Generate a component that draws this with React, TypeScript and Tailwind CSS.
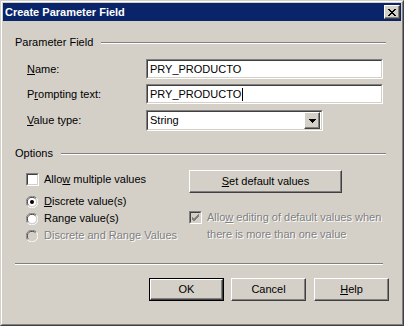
const raised =
  "border border-t-white border-l-white border-r-[#404040] border-b-[#404040] shadow-[inset_-1px_-1px_#808080] bg-[#d4d0c8]";
const sunken =
  "border border-t-[#808080] border-l-[#808080] border-r-white border-b-white";
const sunkenInner =
  "border border-t-[#404040] border-l-[#404040] border-r-[#d4d0c8] border-b-[#d4d0c8]";
const disabledText = "text-[#808080] [text-shadow:1px_1px_0_#ffffff]";

function Etched({ className = "" }: { className?: string }) {
  return <div className={`h-[2px] border-t border-t-[#808080] border-b border-b-white ${className}`} />;
}

function GroupHeader({ label, className = "" }: { label: string; className?: string }) {
  return (
    <div className={`flex items-center h-[13px] pl-[12px] pr-[15px] ${className}`}>
      <span className="leading-[13px] mr-[8px] whitespace-nowrap">{label}</span>
      <Etched className="flex-1" />
    </div>
  );
}

function TextBox({ value, caret = false }: { value: string; caret?: boolean }) {
  return (
    <div className={`w-[237px] h-[20px] ${sunken}`}>
      <div className={`h-full ${sunkenInner} bg-white flex items-center pl-[2px]`}>
        <span className="leading-[14px]">{value}</span>
        {caret && <span className="w-px h-[13px] bg-black ml-px" />}
      </div>
    </div>
  );
}

function Radio({ checked = false, disabled = false }: { checked?: boolean; disabled?: boolean }) {
  return (
    <svg width="12" height="12" viewBox="0 0 12 12" className="shrink-0">
      <path d="M10.5 2.2 A5.5 5.5 0 0 0 1.5 9.8" fill="none" stroke="#808080" strokeWidth="1" />
      <path d="M1.5 9.8 A5.5 5.5 0 0 0 10.5 2.2" fill="none" stroke="#ffffff" strokeWidth="1" />
      <path d="M9.5 2.9 A4.5 4.5 0 0 0 2.5 9.1" fill="none" stroke="#404040" strokeWidth="1" />
      <path d="M2.5 9.1 A4.5 4.5 0 0 0 9.5 2.9" fill="none" stroke="#d4d0c8" strokeWidth="1" />
      <circle cx="6" cy="6" r="4" fill={disabled ? "#d4d0c8" : "#ffffff"} />
      {checked && <circle cx="6" cy="6" r="2" fill="#000000" />}
    </svg>
  );
}

function CheckBox({ checked = false, disabled = false }: { checked?: boolean; disabled?: boolean }) {
  return (
    <div className={`w-[13px] h-[13px] shrink-0 ${sunken}`}>
      <div className={`w-full h-full ${sunkenInner} ${disabled ? "bg-[#d4d0c8]" : "bg-white"}`}>
        {checked && (
          <svg width="9" height="9" viewBox="0 0 9 9" className="block">
            <path d="M1 4 L3 6 L8 1 M1 5 L3 7 L8 2 M1 6 L3 8 L8 3" fill="none" stroke={disabled ? "#808080" : "#000"} strokeWidth="1" />
          </svg>
        )}
      </div>
    </div>
  );
}

function Button({ children, isDefault = false, className = "" }: { children: React.ReactNode; isDefault?: boolean; className?: string }) {
  if (isDefault) {
    return (
      <div className={`w-[75px] h-[23px] border border-black ${className}`}>
        <div className={`h-full ${raised} flex items-center justify-center`}>{children}</div>
      </div>
    );
  }
  return <div className={`h-[23px] ${raised} flex items-center justify-center ${className}`}>{children}</div>;
}

export default function App() {
  return (
    <div className="w-[404px] h-[326px] bg-[#d4d0c8] text-black text-[11px] font-['Liberation_Sans',Arial,sans-serif] border border-t-[#d4d0c8] border-l-[#d4d0c8] border-r-[#404040] border-b-[#404040] overflow-hidden">
      <div className="h-full border border-t-white border-l-white border-r-[#808080] border-b-[#808080] p-px flex flex-col">
        {/* title bar */}
        <div className="h-[18px] bg-[#0a246a] flex items-center justify-between pl-[2px] pr-[1px] shrink-0">
          <span className="text-white font-bold text-[11px] leading-[13px]">Create Parameter Field</span>
          <div className={`w-[16px] h-[14px] ${raised} flex items-center justify-center`}>
            <svg width="8" height="7" viewBox="0 0 8 7">
              <path d="M0 0h2v1h-2zM1 1h2v1h-2zM2 2h4v1h-4zM3 3h2v1h-2zM2 4h4v1h-4zM1 5h2v1h-2zM0 6h2v1h-2zM6 0h2v1h-2zM5 1h2v1h-2zM5 5h2v1h-2zM6 6h2v1h-2z" fill="#000" />
            </svg>
          </div>
        </div>

        {/* body */}
        <div className="flex-1 flex flex-col">
          <GroupHeader label="Parameter Field" className="mt-[15px]" />

          <div className="flex items-center h-[20px] mt-[10px] pl-[24px]">
            <span className="w-[119px]"><u>N</u>ame:</span>
            <TextBox value="PRY_PRODUCTO" />
          </div>
          <div className="flex items-center h-[20px] mt-[5px] pl-[24px]">
            <span className="w-[119px]">P<u>r</u>ompting text:</span>
            <TextBox value="PRY_PRODUCTO" caret />
          </div>
          <div className="flex items-center h-[21px] mt-[6px] pl-[24px]">
            <span className="w-[119px]"><u>V</u>alue type:</span>
            <div className={`w-[177px] h-[21px] ${sunken}`}>
              <div className={`h-full ${sunkenInner} bg-white flex items-center justify-between pl-[2px] pr-px`}>
                <span>String</span>
                <div className={`w-[16px] h-[17px] ${raised} flex items-center justify-center`}>
                  <svg width="7" height="4" viewBox="0 0 7 4">
                    <path d="M0 0h7v1h-7zM1 1h5v1h-5zM2 2h3v1h-3zM3 3h1v1h-1z" fill="#000" />
                  </svg>
                </div>
              </div>
            </div>
          </div>

          <GroupHeader label="Options" className="mt-[16px]" />

          <div className="flex items-start">
            <div className="flex flex-col pl-[23px] mt-[12px] w-[186px]">
              <div className="flex items-center h-[14px] gap-[5px]">
                <CheckBox />
                <span>Allo<u>w</u> multiple values</span>
              </div>
              <div className="flex items-center h-[17px] mt-[7px] gap-[6px]">
                <Radio checked />
                <span><u>D</u>iscrete value(s)</span>
              </div>
              <div className="flex items-center h-[17px] gap-[6px]">
                <Radio />
                <span>Range value(s)</span>
              </div>
              <div className="flex items-center h-[17px] gap-[6px]">
                <Radio disabled />
                <span className={disabledText}>Discrete and Range Values</span>
              </div>
            </div>
            <div className="flex flex-col mt-[10px]">
              <Button className="w-[153px]"><span><u>S</u>et default values</span></Button>
              <div className="flex items-start mt-[18px] gap-[5px]">
                <CheckBox checked disabled />
                <span className={`leading-[17px] -mt-[2px] w-[180px] ${disabledText}`}>
                  Allo<u>w</u> editing of default values when there is more than one value
                </span>
              </div>
            </div>
          </div>

          <Etched className="mt-[19px] ml-[12px] mr-[18px]" />

          <div className="flex justify-end mt-[13px] pr-[12px]">
            <Button isDefault>OK</Button>
            <Button className="w-[75px] ml-[7px]">Cancel</Button>
            <Button className="w-[75px] ml-[8px]"><span><u>H</u>elp</span></Button>
          </div>
        </div>
      </div>
    </div>
  );
}
